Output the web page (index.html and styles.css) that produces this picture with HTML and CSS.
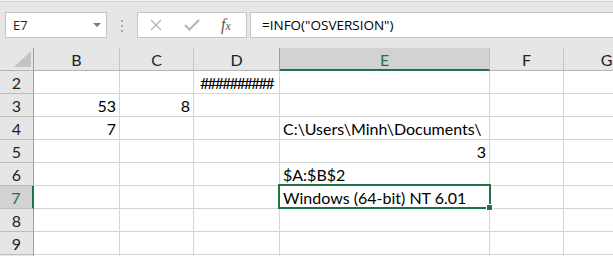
FILE: index.html
```html
<!DOCTYPE html>
<html lang="en">

<head>
    <meta charset="UTF-8">
    <title>INFO OSVERSION</title>
    <link rel="stylesheet" href="styles.css">
</head>

<body>
    <div class="top-edge"></div>

    <!-- Formula bar -->
    <div class="formula-row">
        <div class="name-box"><span>E7</span><i class="caret"></i></div>
        <div class="grip"><i></i><i></i><i></i></div>
        <div class="fx-tools">
            <svg class="ico-x" width="12" height="12" viewBox="0 0 12 12">
                <path d="M1 1 L11 11 M11 1 L1 11" stroke="#b4b4b4" stroke-width="1.4" fill="none" />
            </svg>
            <svg class="ico-ok" width="16" height="12" viewBox="0 0 16 12">
                <path d="M1 6 L5.5 10.5 L15 1" stroke="#b4b4b4" stroke-width="2" fill="none" />
            </svg>
            <span class="fx">f<span class="fx-x">x</span></span>
        </div>
        <div class="formula-input">=INFO("OSVERSION")</div>
    </div>

    <!-- Sheet -->
    <div class="sheet">
        <div class="hd corner">
            <svg width="17" height="16" viewBox="0 0 17 16">
                <polygon points="17,0 17,16 0,16" fill="#c3c3c3" />
            </svg>
        </div>
        <div class="hd">B</div>
        <div class="hd">C</div>
        <div class="hd before-on">D</div>
        <div class="hd on">E</div>
        <div class="hd">F</div>
        <div class="hd">G</div>

        <div class="rh">2</div>
        <div class="c"></div>
        <div class="c"></div>
        <div class="c center hashes">##########</div>
        <div class="c"></div>
        <div class="c"></div>
        <div class="c"></div>

        <div class="rh">3</div>
        <div class="c num">53</div>
        <div class="c num">8</div>
        <div class="c"></div>
        <div class="c"></div>
        <div class="c"></div>
        <div class="c"></div>

        <div class="rh">4</div>
        <div class="c num">7</div>
        <div class="c"></div>
        <div class="c"></div>
        <div class="c">C:\Users\Minh\Documents\</div>
        <div class="c"></div>
        <div class="c"></div>

        <div class="rh">5</div>
        <div class="c"></div>
        <div class="c"></div>
        <div class="c"></div>
        <div class="c num">3</div>
        <div class="c"></div>
        <div class="c"></div>

        <div class="rh">6</div>
        <div class="c"></div>
        <div class="c"></div>
        <div class="c"></div>
        <div class="c">$A:$B$2</div>
        <div class="c"></div>
        <div class="c"></div>

        <div class="rh on">7</div>
        <div class="c"></div>
        <div class="c"></div>
        <div class="c"></div>
        <div class="c">Windows (64-bit) NT 6.01</div>
        <div class="c"></div>
        <div class="c"></div>

        <div class="rh">8</div>
        <div class="c"></div>
        <div class="c"></div>
        <div class="c"></div>
        <div class="c"></div>
        <div class="c"></div>
        <div class="c"></div>

        <div class="rh">9</div>
        <div class="c"></div>
        <div class="c"></div>
        <div class="c"></div>
        <div class="c"></div>
        <div class="c"></div>
        <div class="c"></div>

        <!-- linha 10, só a borda aparece -->
        <div class="rh"></div>
        <div class="c"></div>
        <div class="c"></div>
        <div class="c"></div>
        <div class="c"></div>
        <div class="c"></div>
        <div class="c"></div>

        <!-- Active cell E7 -->
        <div class="selection"><i class="handle"></i></div>
    </div>
</body>

</html>
```

FILE: styles.css
```css
body {
    margin: 0;
    width: 613px;
    height: 256px;
    overflow: hidden;
    background-color: #e6e6e6;
    font-family: Lato, "Liberation Sans", sans-serif;
}

.top-edge {
    height: 1px;
    background-color: #f3f3f3;
    border-bottom: 1px solid #d2d2d2;
}

/* Barra de fórmulas */
.formula-row {
    display: flex;
    height: 26px;
    margin-top: 10px;
    padding-left: 5px;
    font-family: "Open Sans", "Liberation Sans", sans-serif;
    font-size: 13px;
    color: #222;
}

.name-box {
    width: 102px;
    box-sizing: border-box;
    border: 1px solid #c6c6c6;
    background-color: #fff;
    display: flex;
    align-items: center;
    padding-left: 7px;
}

.caret {
    margin-left: auto;
    margin-right: 5px;
    border-left: 4px solid transparent;
    border-right: 4px solid transparent;
    border-top: 4px solid #7a7a7a;
}

.grip {
    width: 2px;
    margin: 0 14px;
    padding-top: 2px;
    display: flex;
    flex-direction: column;
    justify-content: center;
    gap: 3px;
}

.grip i {
    width: 2px;
    height: 2px;
    background-color: #aaa;
}

.fx-tools {
    width: 110px;
    box-sizing: border-box;
    border: 1px solid #c6c6c6;
    background-color: #fff;
    display: flex;
    align-items: center;
}

.ico-x {
    margin-left: 12px;
}

.ico-ok {
    margin-left: 22px;
}

.fx {
    margin-left: 21px;
    font-family: "Liberation Serif", serif;
    font-style: italic;
    font-size: 16px;
    color: #555;
}

.fx-x {
    font-size: 12px;
}

.formula-input {
    flex: 1;
    margin-left: 3px;
    margin-right: -5px;
    border: 1px solid #c6c6c6;
    background-color: #fff;
    display: flex;
    align-items: center;
    padding-left: 11px;
    font-size: 13.5px;
    color: #000;
}

/* Planilha */
.sheet {
    position: relative;
    margin-top: 10px;
    display: grid;
    grid-template-columns: 34px 86px 74px 86px 210px 74px 86px;
    grid-auto-rows: 23px;
    font-size: 16px;
}

.sheet > div {
    box-sizing: border-box;
}

.hd {
    background-color: #e6e6e6;
    border-right: 1px solid #c4c4c4;
    border-bottom: 1px solid #b4b4b4;
    display: flex;
    align-items: center;
    justify-content: center;
    color: #222;
    padding-top: 1px;
}

.corner {
    border-right-color: #9e9e9e;
    align-items: flex-end;
    justify-content: flex-end;
    padding: 0 2px 3px 0;
}

.corner svg {
    display: block;
}

.hd.before-on {
    border-right-color: #9e9e9e;
}

.hd.on {
    background-color: #d2d2d2;
    color: #217346;
    border-bottom: 2px solid #217346;
}

.rh {
    background-color: #e6e6e6;
    border-right: 1px solid #9e9e9e;
    border-bottom: 1px solid #bdbdbd;
    display: flex;
    align-items: center;
    justify-content: center;
    color: #222;
    padding-top: 1px;
}

.rh.on {
    background-color: #d2d2d2;
    color: #217346;
    border-right: 2px solid #217346;
}

.c {
    background-color: #fff;
    border-right: 1px solid #d4d4d4;
    border-bottom: 1px solid #d4d4d4;
    display: flex;
    align-items: flex-end;
    padding: 0 3px 1px;
    line-height: 19px;
    white-space: nowrap;
    color: #000;
}

.c.num {
    justify-content: flex-end;
}

.c.center {
    justify-content: center;
}

.hashes {
    letter-spacing: -2px;
}

.selection {
    position: absolute;
    left: 278px;
    top: 136px;
    width: 213px;
    height: 25px;
    box-sizing: border-box;
    border: 2px solid #217346;
}

.handle {
    position: absolute;
    right: -4px;
    bottom: -4px;
    width: 5px;
    height: 5px;
    background-color: #217346;
    border: 1px solid #fff;
}
```
